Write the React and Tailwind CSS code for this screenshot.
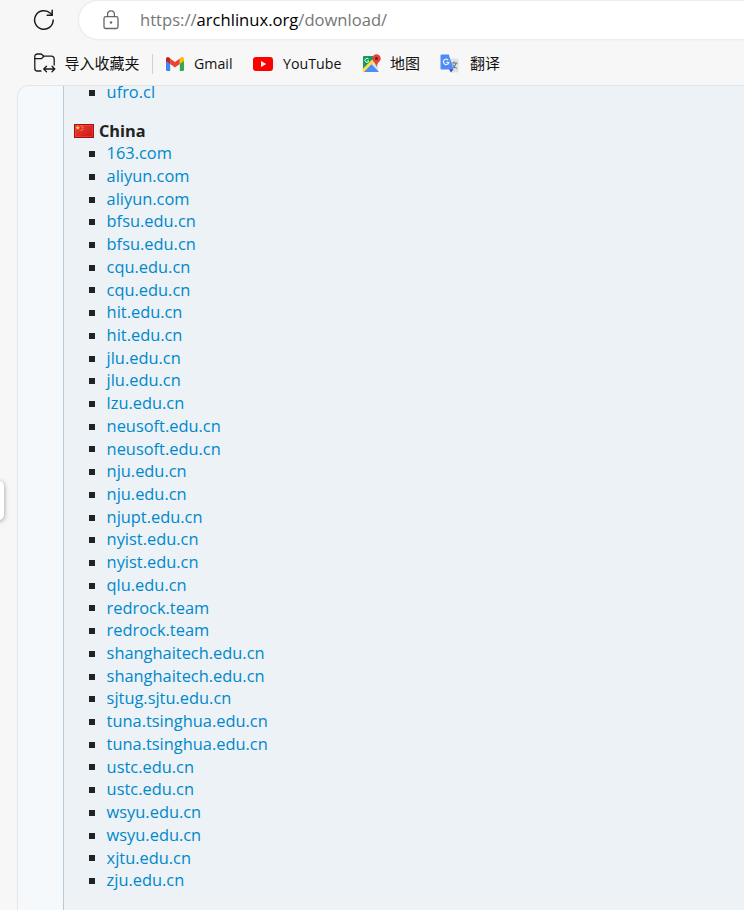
const mirrors = [
  '163.com', 'aliyun.com', 'aliyun.com', 'bfsu.edu.cn', 'bfsu.edu.cn', 'cqu.edu.cn', 'cqu.edu.cn',
  'hit.edu.cn', 'hit.edu.cn', 'jlu.edu.cn', 'jlu.edu.cn', 'lzu.edu.cn', 'neusoft.edu.cn',
  'neusoft.edu.cn', 'nju.edu.cn', 'nju.edu.cn', 'njupt.edu.cn', 'nyist.edu.cn', 'nyist.edu.cn',
  'qlu.edu.cn', 'redrock.team', 'redrock.team', 'shanghaitech.edu.cn', 'shanghaitech.edu.cn',
  'sjtug.sjtu.edu.cn', 'tuna.tsinghua.edu.cn', 'tuna.tsinghua.edu.cn', 'ustc.edu.cn', 'ustc.edu.cn',
  'wsyu.edu.cn', 'wsyu.edu.cn', 'xjtu.edu.cn', 'zju.edu.cn',
];

function ReloadIcon() {
  return (
    <svg className="ml-[33px] h-[22px] w-[22px] shrink-0" viewBox="0 0 22 22" fill="none" stroke="#1b1b1b" strokeWidth="1.5" strokeLinecap="round" strokeLinejoin="round">
      <path d="M20.2 11A9.3 9.3 0 1 1 17.4 4.3L19 6" />
      <path d="M19.2 1.2V6.2H14.2" />
    </svg>
  );
}

function LockIcon() {
  return (
    <svg className="-mt-px ml-6 h-[20px] w-[16px] shrink-0" viewBox="0 0 16 20" fill="none" stroke="#666" strokeWidth="1.3">
      <rect x="1" y="6.7" width="14" height="11.8" rx="1.8" />
      <path d="M4.6 6.7V4.2a3.4 3.4 0 0 1 6.8 0v2.5" />
      <circle cx="8" cy="12.5" r="1.2" fill="#666" stroke="none" />
    </svg>
  );
}

function FolderIcon() {
  return (
    <svg className="-mt-px ml-[34px] h-[20px] w-[22px] shrink-0" viewBox="0 0 22 20" fill="none" stroke="#1b1b1b" strokeWidth="1.3" strokeLinecap="round" strokeLinejoin="round">
      <path d="M7 18H3.300A2.500 2.500 0 0 1 .8 15.500V3.500A2.500 2.500 0 0 1 3.300 1H6.500Q7.500 1 8.200 1.700L9.800 3.200H17.500A2.700 2.700 0 0 1 20.200 5.900V12" />
      <path d="M.8 5.700H6.500Q7.400 5.700 8.100 5L9.800 3.200" />
      <path d="M10 16H20.500M12.500 13.200L9.700 16L12.500 18.800M18 13.200L20.800 16L18 18.800" />
    </svg>
  );
}

function GmailIcon() {
  return (
    <svg className="ml-[13px] h-[14px] w-[18px] shrink-0" viewBox="0 0 18 14">
      <path d="M0 2.500V12.700Q0 14 1.300 14H4.200V6Z" fill="#4285f4" />
      <path d="M18 2.500V12.700Q18 14 16.700 14H13.800V6Z" fill="#34a853" />
      <path d="M4.200 1.400L9 5L13.800 1.400V7L9 10.600L4.200 7Z" fill="#ea4335" />
      <path d="M0 2.100C0 .2 2.100-.6 3.500.8L4.200 1.400V7L0 3.900Z" fill="#c5221f" />
      <path d="M18 2.100C18 .2 15.900-.6 14.500.8L13.800 1.400V7L18 3.900Z" fill="#fbbc04" />
    </svg>
  );
}

function YoutubeIcon() {
  return (
    <svg className="ml-5 h-[14px] w-[20px] shrink-0" viewBox="0 0 20 14">
      <rect width="20" height="14" rx="3" fill="#f00" />
      <path d="M8 4L13.200 7L8 10Z" fill="#fff" />
    </svg>
  );
}

function MapsIcon() {
  return (
    <svg className="ml-[21px] h-[19px] w-[19px] shrink-0" viewBox="0 0 19 19">
      <path d="M2 2H16V18H2Q.8 18 .8 16.800V3.200Q.8 2 2 2Z" fill="#dce1e5" />
      <path d="M2 2H15L1 16V3Q1 2 2 2Z" fill="#169c58" />
      <path d="M.8 14.800L10.500 5.300L13 7.700L3 18H2Q.8 18 .8 16.800Z" fill="#ffdc48" />
      <path d="M9.500 10.200L16.700 17.500Q16.500 18 16 18H2Z" fill="#4b8df8" />
      <path d="M6.600 5.200A2 2 0 1 0 6.900 7H5.200" stroke="#e7f5ed" strokeWidth="1" fill="none" />
      <path d="M14.500.3A4.200 4.200 0 0 0 10.300 4.500C10.300 7.800 14 8.500 14.400 13.500C14.800 8.500 18.700 7.800 18.700 4.500A4.200 4.200 0 0 0 14.500.3Z" fill="#e24439" />
      <circle cx="14.500" cy="4.600" r="1.500" fill="#811411" />
    </svg>
  );
}

function TranslateIcon() {
  return (
    <svg className="ml-5 h-[19px] w-[19px] shrink-0" viewBox="0 0 19 19">
      <path d="M7 4.500H17.300Q18.500 4.500 18.500 5.700V17.300Q18.500 18.500 17.300 18.500H11Z" fill="#dfe2e5" />
      <path d="M11 9H17.500M14 7.500V9M16.200 9Q15 13 12 14.500M12.500 10.500Q14 13.500 17 14.500" stroke="#667b8b" strokeWidth="1.100" fill="none" />
      <path d="M9 15H13.500L11 18.500Z" fill="#2549bc" />
      <path d="M1.700 .5H8.800L13.500 15.500H1.700Q.5 15.500 .5 14.300V1.700Q.5 .5 1.700 .5Z" fill="#4f8bf4" />
      <path d="M8.100 6A2.700 2.700 0 1 0 8.800 8.300H6.300" stroke="#e5eeff" strokeWidth="1.300" fill="none" />
    </svg>
  );
}

function ChinaFlag() {
  return (
    <svg className="-mt-px h-[14px] w-[20px] shrink-0" viewBox="0 0 20 14">
      <defs>
        <linearGradient id="flag" x2="1" y2="1"><stop stopColor="#e8443c" /><stop offset="1" stopColor="#cf1212" /></linearGradient>
      </defs>
      <rect x=".5" y=".5" width="19" height="13" fill="url(#flag)" stroke="#b20b0b" />
      <rect x="1.500" y="1.500" width="17" height="11" fill="none" stroke="#ee6660" strokeOpacity=".35" />
      <path d="M3.800 1.600L4.400 3L6 3.100L4.800 4.100L5.200 5.600L3.800 4.800L2.400 5.600L2.800 4.100L1.600 3.100L3.200 3Z" fill="#ffd84a" />
      <path d="M7 1.500h1.200v1H7zM8.500 3h1v1.200h-1zM8.300 5h1v1h-1zM6.500 6.200h1.300v.9H6.500z" fill="#f5b83b" />
    </svg>
  );
}

function Mirror({ name }) {
  return (
    <li className="flex h-[22.720px] items-center">
      <span className="ml-[25px] mt-px h-[6px] w-[6px] bg-[#222]" />
      <a className="ml-[11.600px] whitespace-nowrap text-[#08c]">{name}</a>
    </li>
  );
}

export default function App() {
  return (
    <div className="relative flex h-[910px] w-[744px] flex-col overflow-hidden bg-[#f7f7f7] font-['Open_Sans','Noto_Sans_CJK_SC',sans-serif]">
      <header className="h-[85px] shrink-0">
        <div className="flex h-[40px] items-center">
          <ReloadIcon />
          <div className="ml-6 flex h-[38px] flex-1 items-center rounded-l-full bg-white shadow-[0_0_3px_rgba(0,0,0,0.12)]">
            <LockIcon />
            <span className="ml-[21px] whitespace-nowrap text-[16.600px] text-[#767676]">
              https://<span className="text-black">archlinux.org</span>/download/
            </span>
          </div>
        </div>
        <nav className="flex h-[47px] items-center whitespace-nowrap text-[14.200px] text-[#111]">
          <FolderIcon />
          <span className="ml-[8.500px] text-[15px]">导入收藏夹</span>
          <span className="ml-[12.500px] h-[20px] w-px bg-[#d0d0d0]" />
          <GmailIcon />
          <span className="ml-[10px] w-[39px]">Gmail</span>
          <YoutubeIcon />
          <span className="ml-[10px] w-[58px]">YouTube</span>
          <MapsIcon />
          <span className="ml-[9px] text-[15px]">地图</span>
          <TranslateIcon />
          <span className="ml-[11px] text-[15px]">翻译</span>
        </nav>
      </header>
      <main className="ml-[17px] flex flex-1 overflow-hidden rounded-tl-[12px] border-l border-t border-[#e3e6e8] bg-[#f6f9fc]">
        <section className="ml-[45px] flex-1 border-l border-[#b8cbd8] bg-[#ecf2f5] text-[16.400px] leading-[22.720px]">
          <ul className="-mt-[5px]"><Mirror name="ufro.cl" /></ul>
          <h2 className="ml-[10px] mt-[16.500px] flex h-[22px] items-center gap-[5px] font-bold text-[#222]">
            <ChinaFlag /><span className="text-[16.300px]">China</span>
          </h2>
          <ul>{mirrors.map((name, index) => <Mirror key={index} name={name} />)}</ul>
        </section>
      </main>
      <div className="absolute -left-2 top-[481px] h-[39px] w-[12px] rounded-[5px] bg-white shadow-[0_1px_5px_rgba(0,0,0,0.4)]" />
    </div>
  );
}
